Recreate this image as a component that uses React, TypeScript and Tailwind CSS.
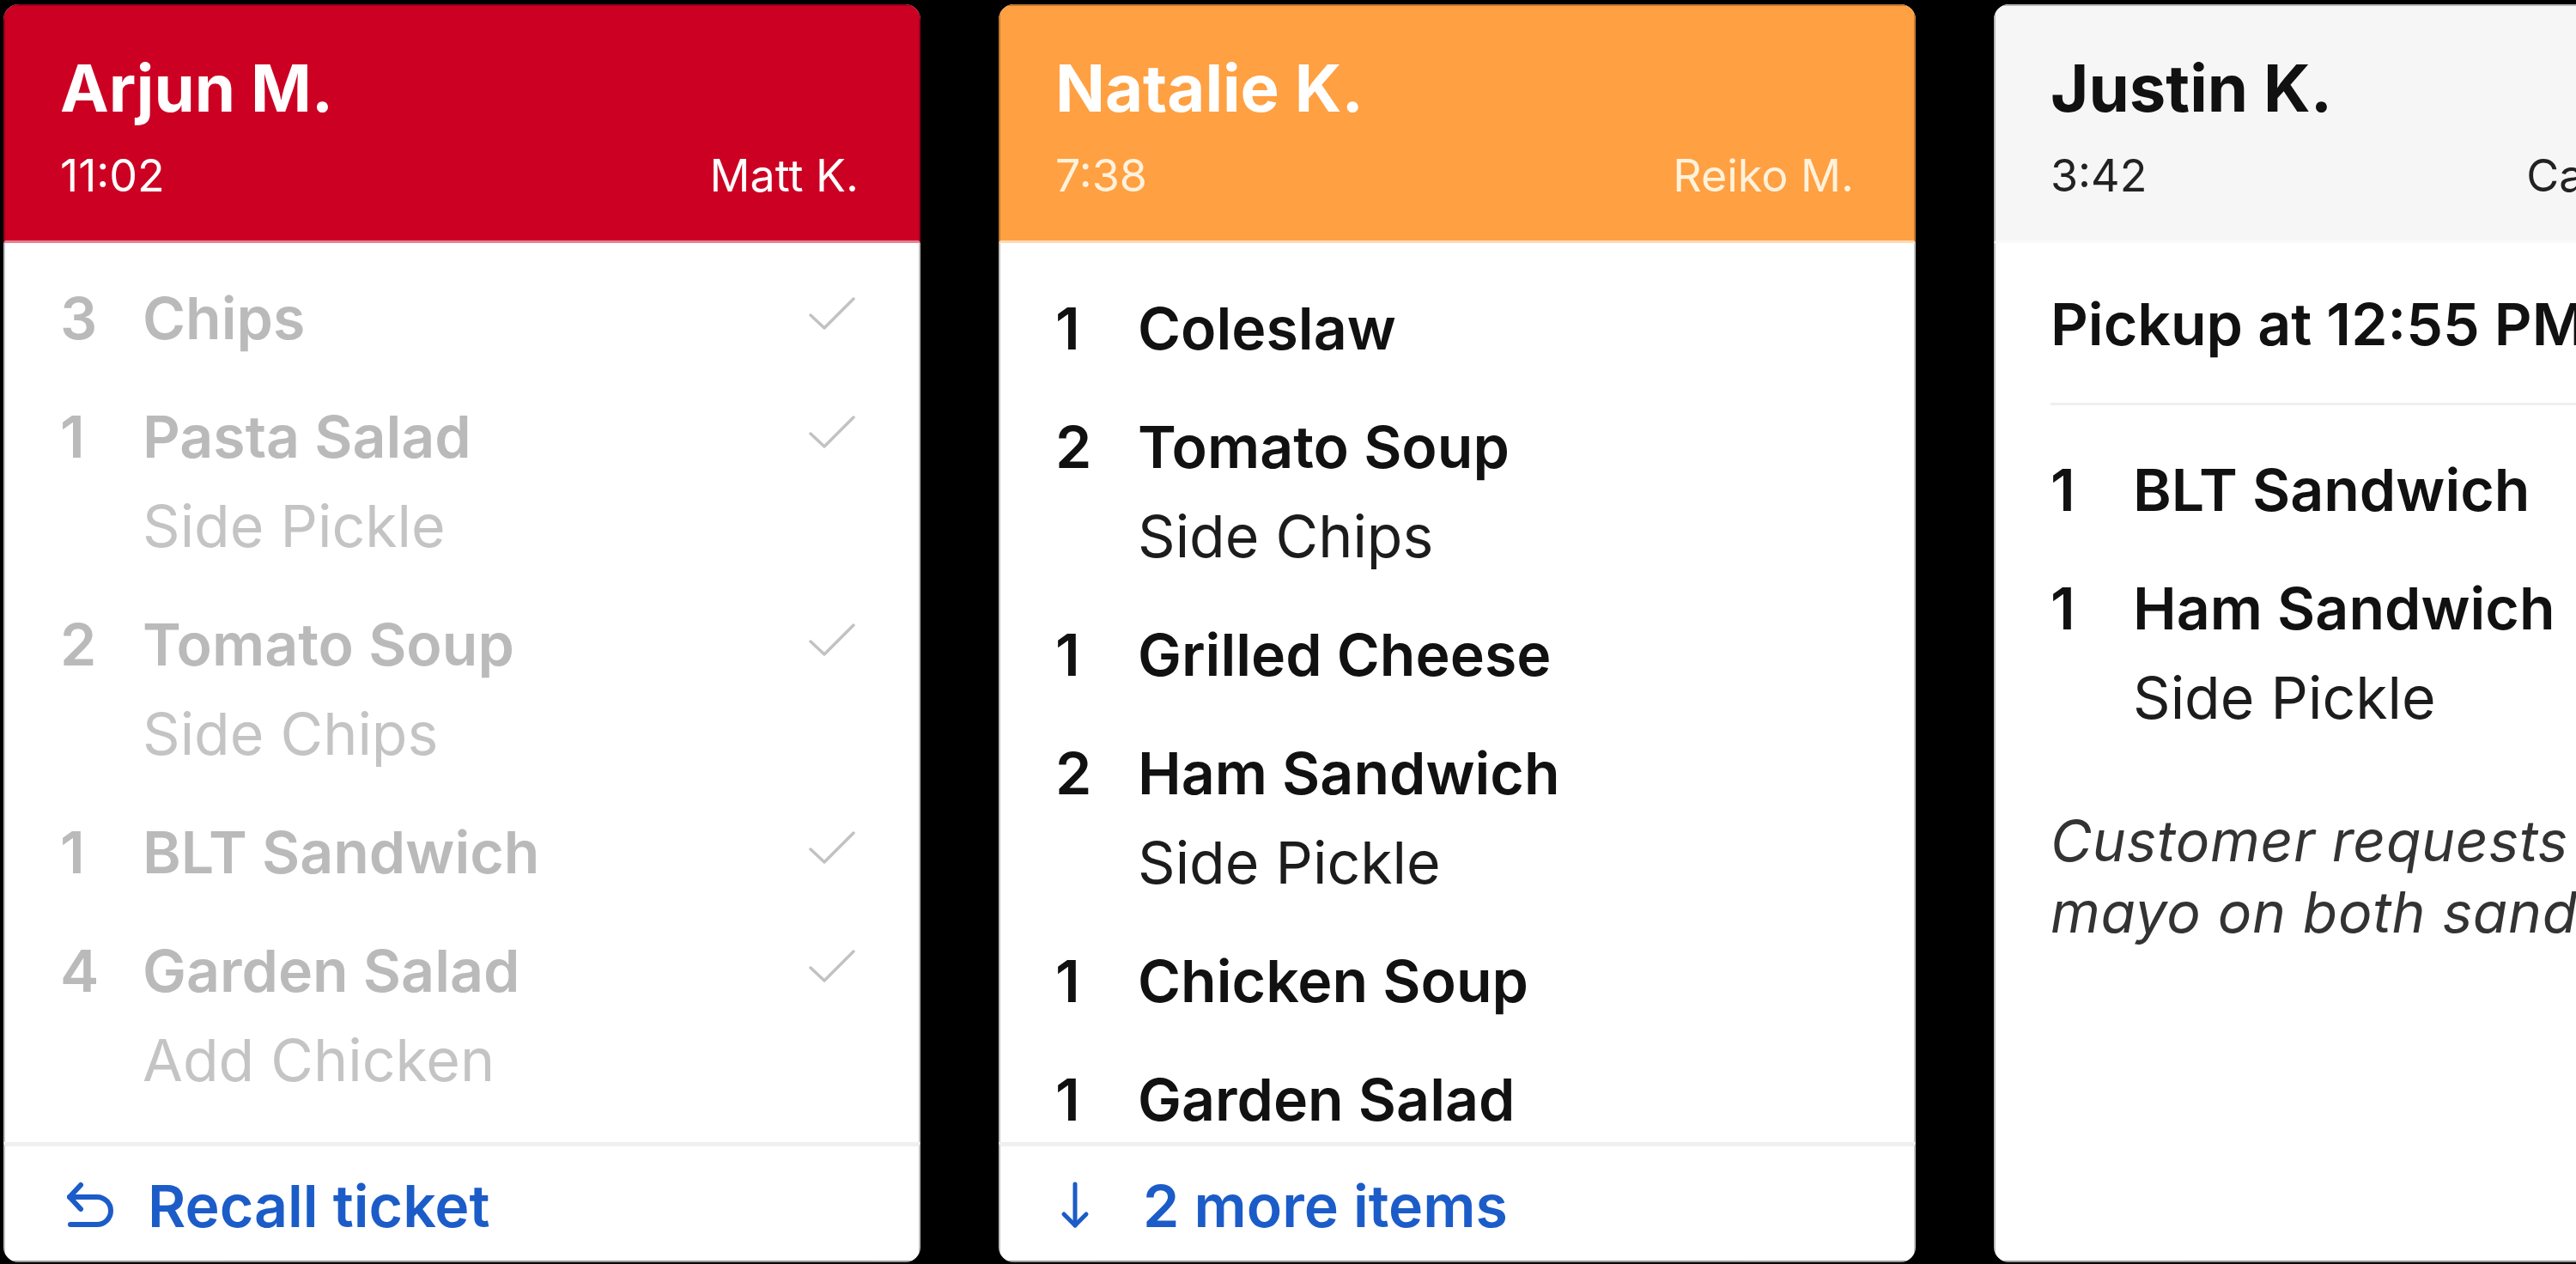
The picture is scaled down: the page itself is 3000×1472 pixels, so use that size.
import React from "react";

type Item = { qty: number; name: string; mods?: string[] };

const card1: Item[] = [
  { qty: 3, name: "Chips" },
  { qty: 1, name: "Pasta Salad", mods: ["Side Pickle"] },
  { qty: 2, name: "Tomato Soup", mods: ["Side Chips"] },
  { qty: 1, name: "BLT Sandwich" },
  { qty: 4, name: "Garden Salad", mods: ["Add Chicken"] },
];

const card2: Item[] = [
  { qty: 1, name: "Coleslaw" },
  { qty: 2, name: "Tomato Soup", mods: ["Side Chips"] },
  { qty: 1, name: "Grilled Cheese" },
  { qty: 2, name: "Ham Sandwich", mods: ["Side Pickle"] },
  { qty: 1, name: "Chicken Soup" },
  { qty: 1, name: "Garden Salad" },
];

const card3: Item[] = [
  { qty: 1, name: "BLT Sandwich" },
  { qty: 1, name: "Ham Sandwich", mods: ["Side Pickle"] },
];

function Check() {
  return (
    <svg viewBox="0 0 54 38" className="w-[54px] h-[38px] mt-[28px] mr-[10px] shrink-0" fill="none">
      <polyline points="2,21 18,36 52,2" stroke="#c2c2c2" strokeWidth="3.5" strokeLinecap="round" strokeLinejoin="round" />
    </svg>
  );
}

function ItemList({ items, done }: { items: Item[]; done?: boolean }) {
  return (
    <div className="flex flex-col gap-[34px]">
      {items.map((it, i) => (
        <div key={i} className="flex flex-col">
          <div className="flex">
            <div
              className={
                "w-[96px] shrink-0 text-[68px] leading-[104px] font-semibold " +
                (done ? "text-[#bababa]" : "text-[#111111]")
              }
            >
              {it.qty}
            </div>
            <div
              className={
                "flex-1 text-[68px] leading-[104px] font-semibold whitespace-nowrap " +
                (done ? "text-[#bababa]" : "text-[#111111]")
              }
            >
              {it.name}
            </div>
            {done && <Check />}
          </div>
          {it.mods?.map((m, j) => (
            <div
              key={j}
              className={
                "pl-[96px] text-[68px] leading-[104px] font-normal whitespace-nowrap " +
                (done ? "text-[#c4c4c4]" : "text-[#1c1c1c]")
              }
            >
              {m}
            </div>
          ))}
        </div>
      ))}
    </div>
  );
}

function RecallIcon() {
  return (
    <svg viewBox="0 0 56 56" className="w-[56px] h-[56px]" fill="none">
      <path d="M18 4 L5 18 L18 32" stroke="#1b5cc8" strokeWidth="6" strokeLinecap="round" strokeLinejoin="round" />
      <path d="M5 18 H37 A16 16 0 0 1 37 50 H6" stroke="#1b5cc8" strokeWidth="6" strokeLinecap="round" strokeLinejoin="round" />
    </svg>
  );
}

function DownIcon() {
  return (
    <svg viewBox="0 0 34 56" className="w-[34px] h-[56px]" fill="none">
      <path d="M17 3 V51" stroke="#1b5cc8" strokeWidth="5" strokeLinecap="round" />
      <path d="M4 38 L17 51 L30 38" stroke="#1b5cc8" strokeWidth="5" strokeLinecap="round" strokeLinejoin="round" />
    </svg>
  );
}

export default function App() {
  return (
    <div className="w-[3000px] h-[1472px] bg-black overflow-hidden flex gap-[91px] pl-[4px] pt-[5px] font-['Inter',sans-serif]">
      {/* Card 1 */}
      <div className="w-[1068px] h-[1465px] shrink-0 rounded-[18px] overflow-hidden flex flex-col bg-white">
        <div className="h-[278px] shrink-0 bg-[#cc0023] border-l-2 border-r-2 border-t-2 border-l-black/25 border-r-black/25 border-t-black/25 border-b-[3px] border-b-white/50 px-[64px] pt-[50px]">
          <div className="text-[76px] leading-[90px] font-bold text-white">Arjun M.</div>
          <div className="mt-[28px] flex justify-between text-[52px] leading-[60px] text-white pr-[6px]">
            <span>11:02</span>
            <span>Matt K.</span>
          </div>
        </div>
        <div className="flex-1 overflow-hidden border-l-2 border-r-2 border-black/25 px-[64px] pt-[35px]">
          <ItemList items={card1} done />
        </div>
        <div className="h-[140px] shrink-0 border-l-2 border-r-2 border-b-2 border-t-[5px] border-l-black/25 border-r-black/25 border-b-black/40 border-t-[#f0f0f0] px-[64px] pt-[4px] flex items-center">
          <div className="w-[102px] shrink-0 flex items-center pl-[6px]">
            <RecallIcon />
          </div>
          <div className="text-[68px] leading-[104px] font-semibold text-[#1b5cc8] whitespace-nowrap">Recall ticket</div>
        </div>
      </div>

      {/* Card 2 */}
      <div className="w-[1068px] h-[1465px] shrink-0 rounded-[18px] overflow-hidden flex flex-col bg-white">
        <div className="h-[278px] shrink-0 bg-[#ffa042] border-l-2 border-r-2 border-t-2 border-l-black/25 border-r-black/25 border-t-black/25 border-b-[3px] border-b-white/60 px-[64px] pt-[50px]">
          <div className="text-[76px] leading-[90px] font-bold text-white">Natalie K.</div>
          <div className="mt-[28px] flex justify-between text-[52px] leading-[60px] text-[#fff2dc] pr-[6px]">
            <span>7:38</span>
            <span>Reiko M.</span>
          </div>
        </div>
        <div className="flex-1 overflow-hidden border-l-2 border-r-2 border-black/25 px-[64px] pt-[47px]">
          <ItemList items={card2} />
        </div>
        <div className="h-[140px] shrink-0 border-l-2 border-r-2 border-b-2 border-t-[5px] border-l-black/25 border-r-black/25 border-b-black/40 border-t-[#f0f0f0] px-[64px] pt-[4px] flex items-center">
          <div className="w-[102px] shrink-0 flex items-center pl-[6px]">
            <DownIcon />
          </div>
          <div className="text-[68px] leading-[104px] font-semibold text-[#1b5cc8] whitespace-nowrap">2 more items</div>
        </div>
      </div>

      {/* Card 3 */}
      <div className="w-[1068px] h-[1465px] shrink-0 rounded-[18px] overflow-hidden flex flex-col bg-white">
        <div className="h-[278px] shrink-0 bg-[#f6f6f6] border-l-2 border-r-2 border-t-2 border-l-black/25 border-r-black/25 border-t-black/25 border-b-[3px] border-b-[#fafafa] px-[64px] pt-[50px]">
          <div className="text-[76px] leading-[90px] font-bold text-[#111111]">Justin K.</div>
          <div className="mt-[28px] flex justify-between text-[52px] leading-[60px] text-[#222222]">
            <span>3:42</span>
            <span className="pr-[9px]">Caviar Delivery</span>
          </div>
        </div>
        <div className="flex-1 overflow-hidden border-l-2 border-r-2 border-b-2 border-l-black/25 border-r-black/25 border-b-black/40 px-[64px] pt-[42px]">
          <div className="text-[68px] leading-[104px] font-semibold text-[#111111] whitespace-nowrap">Pickup at 12:55 PM</div>
          <div className="mt-[40px] h-[3px] bg-[#efefef]" />
          <div className="mt-[46px]">
            <ItemList items={card3} />
          </div>
          <div className="mt-[74px] text-[66px] leading-[83px] tracking-[0.01em] italic font-normal text-[#333333]">
            Customer requests extra mayo on both sandwiches.
          </div>
        </div>
      </div>
    </div>
  );
}
